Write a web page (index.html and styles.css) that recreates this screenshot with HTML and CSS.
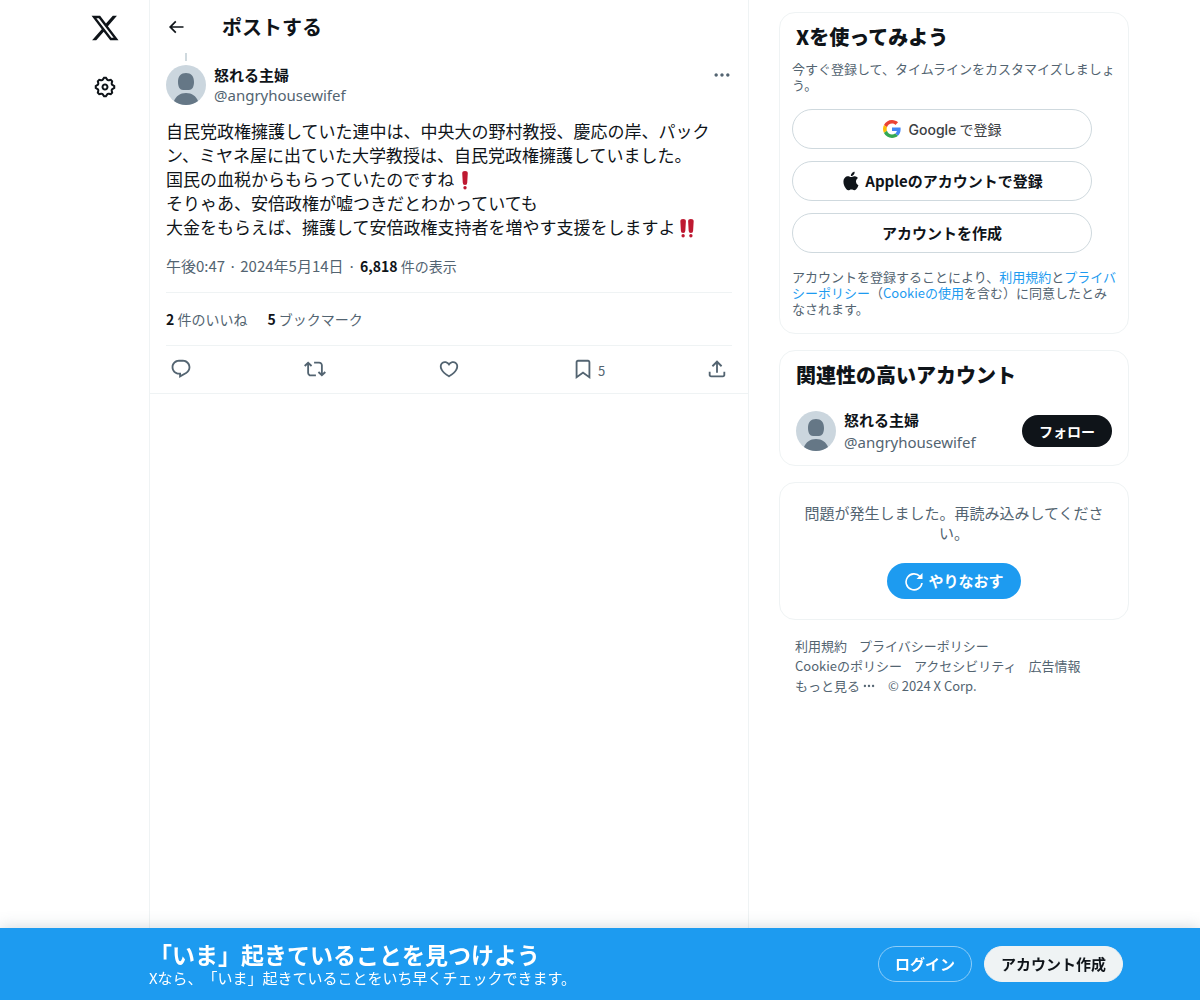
FILE: index.html
```html
<!DOCTYPE html>
<html lang="ja">
<head>
    <meta charset="UTF-8">
    <meta name="viewport" content="width=device-width, initial-scale=1.0">
    <title>怒れる主婦 / X</title>
    <link rel="stylesheet" href="styles.css">
</head>
<body>

    <div class="page">
        <nav class="nav">
            <a href="#" class="nav-logo" aria-label="X">
                <svg viewBox="0 0 24 24"><path d="M18.244 2.25h3.308l-7.227 8.26 8.502 11.24H16.17l-5.214-6.817L4.99 21.75H1.68l7.73-8.835L1.254 2.25H8.08l4.713 6.231zm-1.161 17.52h1.833L7.084 4.126H5.117z"/></svg>
            </a>
            <a href="#" class="nav-settings" aria-label="設定">
                <svg viewBox="0 0 24 24"><path d="M10.54 1.75h2.92l1.57 2.36c.11.17.32.25.53.21l2.53-.59 2.17 2.17-.58 2.54c-.05.2.04.41.21.53l2.36 1.57v2.92l-2.36 1.57c-.17.12-.26.33-.21.53l.58 2.54-2.17 2.17-2.53-.59c-.21-.04-.42.04-.53.21l-1.57 2.36h-2.92l-1.58-2.36c-.11-.17-.32-.25-.52-.21l-2.54.59-2.17-2.17.58-2.54c.05-.2-.03-.41-.21-.53l-2.35-1.57v-2.92L4.1 8.97c.18-.12.26-.33.21-.53L3.73 5.9 5.9 3.73l2.54.59c.2.04.41-.04.52-.21l1.58-2.36zm1.07 2l-.98 1.47C10.05 6.08 9 6.5 7.99 6.27l-1.46-.34-.6.6.33 1.46c.24 1.01-.18 2.07-1.05 2.64l-1.46.98v.78l1.46.98c.87.57 1.29 1.63 1.05 2.64l-.33 1.46.6.6 1.46-.34c1.01-.23 2.06.19 2.64 1.05l.98 1.47h.78l.97-1.47c.58-.86 1.63-1.28 2.65-1.05l1.45.34.61-.6-.34-1.46c-.23-1.01.18-2.07 1.05-2.64l1.47-.98v-.78l-1.47-.98c-.87-.57-1.28-1.63-1.05-2.64l.34-1.46-.61-.6-1.45.34c-1.02.23-2.07-.19-2.65-1.05l-.97-1.47h-.78zM12 10.5c-.83 0-1.5.67-1.5 1.5s.67 1.5 1.5 1.5c.82 0 1.5-.67 1.5-1.5s-.68-1.5-1.5-1.5zM8.5 12c0-1.93 1.56-3.5 3.5-3.5 1.93 0 3.5 1.57 3.5 3.5s-1.57 3.5-3.5 3.5c-1.94 0-3.5-1.57-3.5-3.5z"/></svg>
            </a>
        </nav>

        <main class="main">
            <header class="main-header">
                <button class="icon-button back" aria-label="戻る">
                    <svg viewBox="0 0 24 24"><path d="M7.414 13l5.043 5.04-1.414 1.42L3.586 12l7.457-7.46 1.414 1.42L7.414 11H21v2H7.414z"/></svg>
                </button>
                <h1>ポストする</h1>
            </header>

            <article class="post">
                <div class="thread-line"></div>
                <div class="user">
                    <svg class="avatar" viewBox="0 0 40 40"><circle cx="20" cy="20" r="20" fill="#cbd6de"/><path d="M20 8c5 0 8 3 8 9 0 5-2 8-5 8h-6c-3 0-5-3-5-8 0-6 3-9 8-9zM8 36c2-5 6-8 12-8s10 3 12 8a20 20 0 0 1-24 0z" fill="#657786"/></svg>
                    <div class="user-names">
                        <a href="#" class="name">怒れる主婦</a>
                        <a href="#" class="handle">@angryhousewifef</a>
                    </div>
                    <button class="icon-button more" aria-label="もっと見る">
                        <svg viewBox="0 0 24 24"><path d="M3 12c0-1.1.9-2 2-2s2 .9 2 2-.9 2-2 2-2-.9-2-2zm9 2c1.1 0 2-.9 2-2s-.9-2-2-2-2 .9-2 2 .9 2 2 2zm7 0c1.1 0 2-.9 2-2s-.9-2-2-2-2 .9-2 2 .9 2 2 2z"/></svg>
                    </button>
                </div>

                <p class="post-text">自民党政権擁護していた連中は、中央大の野村教授、慶応の岸、パックン、ミヤネ屋に出ていた大学教授は、自民党政権擁護していました。<br>
                国民の血税からもらっていたのですね<svg class="emoji" viewBox="0 0 36 36" role="img" aria-label="❗"><path d="M13 6q0-4 5-4t5 4l-1 17q0 4-4 4t-4-4z"/><circle cx="18" cy="32" r="3"/></svg><br>
                そりゃあ、安倍政権が嘘つきだとわかっていても<br>
                大金をもらえば、擁護して安倍政権支持者を増やす支援をしますよ<svg class="emoji" viewBox="0 0 36 36" role="img" aria-label="‼"><path d="M6 6q0-4 5-4t5 4l-1 17q0 4-4 4t-4-4zM20 6q0-4 5-4t5 4l-1 17q0 4-4 4t-4-4z"/><circle cx="11" cy="32" r="3"/><circle cx="25" cy="32" r="3"/></svg></p>

                <div class="meta">
                    <a href="#">午後0:47 · 2024年5月14日</a>
                    <span>·</span>
                    <span class="views"><strong>6,818</strong> 件の表示</span>
                </div>

                <div class="stats">
                    <a href="#"><strong>2</strong> 件のいいね</a>
                    <a href="#"><strong>5</strong> ブックマーク</a>
                </div>

                <div class="actions">
                    <button class="icon-button" aria-label="返信">
                        <svg viewBox="0 0 24 24"><path d="M1.751 10c0-4.42 3.584-8 8.005-8h4.366c4.49 0 8.129 3.64 8.129 8.13 0 2.96-1.607 5.68-4.196 7.11l-8.054 4.46v-3.69h-.067c-4.49.1-8.183-3.51-8.183-8.01zm8.005-6c-3.317 0-6.005 2.69-6.005 6 0 3.37 2.77 6.08 6.138 6.01l.351-.01h1.761v2.3l5.087-2.81c1.951-1.08 3.163-3.13 3.163-5.36 0-3.39-2.744-6.13-6.129-6.13H9.756z"/></svg>
                    </button>
                    <button class="icon-button" aria-label="リポスト">
                        <svg viewBox="0 0 24 24"><path d="M4.5 3.88l4.432 4.14-1.364 1.46L5.5 7.55V16c0 1.1.896 2 2 2H13v2H7.5c-2.209 0-4-1.79-4-4V7.55L1.432 9.48.068 8.02 4.5 3.88zM16.5 6H11V4h5.5c2.209 0 4 1.79 4 4v8.45l2.068-1.93 1.364 1.46-4.432 4.14-4.432-4.14 1.364-1.46 2.068 1.93V8c0-1.1-.896-2-2-2z"/></svg>
                    </button>
                    <button class="icon-button" aria-label="いいね">
                        <svg viewBox="0 0 24 24"><path d="M16.697 5.5c-1.222-.06-2.679.51-3.89 2.16l-.805 1.09-.806-1.09C9.984 6.01 8.526 5.44 7.304 5.5c-1.243.07-2.349.78-2.91 1.91-.552 1.12-.633 2.78.479 4.82 1.074 1.97 3.257 4.27 7.129 6.61 3.87-2.34 6.052-4.64 7.126-6.61 1.111-2.04 1.03-3.7.477-4.82-.561-1.13-1.666-1.84-2.908-1.91zm4.187 7.69c-1.351 2.48-4.001 5.12-8.379 7.67l-.503.3-.504-.3c-4.379-2.55-7.029-5.19-8.382-7.67-1.36-2.5-1.41-4.86-.514-6.67.887-1.79 2.647-2.91 4.601-3.01 1.651-.09 3.368.56 4.798 2.01 1.429-1.45 3.146-2.1 4.796-2.01 1.954.1 3.714 1.22 4.601 3.01.896 1.81.846 4.17-.514 6.67z"/></svg>
                    </button>
                    <button class="icon-button" aria-label="ブックマーク">
                        <svg viewBox="0 0 24 24"><path d="M4 4.5C4 3.12 5.119 2 6.5 2h11C18.881 2 20 3.12 20 4.5v18.44l-8-5.71-8 5.71V4.5zM6.5 4c-.276 0-.5.22-.5.5v14.56l6-4.29 6 4.29V4.5c0-.28-.224-.5-.5-.5h-11z"/></svg>
                        <span>5</span>
                    </button>
                    <button class="icon-button" aria-label="共有">
                        <svg viewBox="0 0 24 24"><path d="M12 2.59l5.7 5.7-1.41 1.42L13 6.41V16h-2V6.41l-3.3 3.3-1.41-1.42L12 2.59zM21 15l-.02 3.51c0 1.38-1.12 2.49-2.5 2.49H5.5C4.11 21 3 19.88 3 18.5V15h2v3.5c0 .28.22.5.5.5h12.98c.28 0 .5-.22.5-.5L19 15h2z"/></svg>
                    </button>
                </div>
            </article>
        </main>

        <aside class="sidebar">
            <section class="card signup">
                <h2>Xを使ってみよう</h2>
                <p>今すぐ登録して、タイムラインをカスタマイズしましょう。</p>
                <button class="pill google">
                    <svg viewBox="0 0 48 48"><path fill="#EA4335" d="M24 9.5c3.54 0 6.71 1.22 9.21 3.6l6.85-6.85C35.9 2.38 30.47 0 24 0 14.62 0 6.51 5.38 2.56 13.22l7.98 6.19C12.43 13.72 17.74 9.5 24 9.5z"/><path fill="#4285F4" d="M46.98 24.55c0-1.57-.15-3.09-.38-4.55H24v9.02h12.94c-.58 2.96-2.26 5.48-4.78 7.18l7.73 6c4.51-4.18 7.09-10.36 7.09-17.65z"/><path fill="#FBBC05" d="M10.53 28.59c-.48-1.45-.76-2.99-.76-4.59s.27-3.14.76-4.59l-7.98-6.19C.92 16.46 0 20.12 0 24c0 3.88.92 7.54 2.56 10.78l7.97-6.19z"/><path fill="#34A853" d="M24 48c6.48 0 11.93-2.13 15.89-5.81l-7.73-6c-2.15 1.45-4.92 2.3-8.16 2.3-6.26 0-11.57-4.22-13.47-9.91l-7.98 6.19C6.51 42.62 14.62 48 24 48z"/></svg>
                    <span><span class="google-name">Google</span> で登録</span>
                </button>
                <button class="pill apple">
                    <svg viewBox="0 0 24 24"><path d="M16.365 1.43c0 1.14-.493 2.27-1.177 3.08-.744.9-1.99 1.57-2.987 1.57-.12 0-.23-.02-.3-.03-.01-.06-.04-.22-.04-.39 0-1.15.572-2.27 1.206-2.98.804-.94 2.142-1.64 3.248-1.68.03.13.05.28.05.43zm4.565 15.71c-.03.07-.463 1.58-1.518 3.12-.945 1.34-1.94 2.71-3.43 2.71-1.517 0-1.9-.88-3.63-.88-1.698 0-2.302.91-3.67.91-1.377 0-2.332-1.26-3.428-2.8-1.287-1.82-2.323-4.63-2.323-7.28 0-4.28 2.797-6.55 5.552-6.55 1.448 0 2.675.95 3.6.95.865 0 2.222-1.01 3.902-1.01.613 0 2.886.06 4.374 2.19-.13.09-2.383 1.37-2.383 4.19 0 3.26 2.854 4.42 2.955 4.45z"/></svg>
                    <span>Appleのアカウントで登録</span>
                </button>
                <button class="pill">アカウントを作成</button>
                <p>アカウントを登録することにより、<a href="#">利用規約</a>と<a href="#">プライバシーポリシー</a>（<a href="#">Cookieの使用</a>を含む）に同意したとみなされます。</p>
            </section>

            <section class="card related">
                <h2>関連性の高いアカウント</h2>
                <div class="user">
                    <svg class="avatar" viewBox="0 0 40 40"><circle cx="20" cy="20" r="20" fill="#cbd6de"/><path d="M20 8c5 0 8 3 8 9 0 5-2 8-5 8h-6c-3 0-5-3-5-8 0-6 3-9 8-9zM8 36c2-5 6-8 12-8s10 3 12 8a20 20 0 0 1-24 0z" fill="#657786"/></svg>
                    <div class="user-names">
                        <a href="#" class="name">怒れる主婦</a>
                        <a href="#" class="handle">@angryhousewifef</a>
                    </div>
                    <button class="follow">フォロー</button>
                </div>
            </section>

            <section class="card error">
                <p>問題が発生しました。再読み込みしてください。</p>
                <button class="retry">
                    <svg viewBox="0 0 20 20"><path d="M16 5.500A8 8 0 1 0 18 12"/><path class="arrow" d="M18.500 2v6h-6z"/></svg>
                    <span>やりなおす</span>
                </button>
            </section>

            <footer class="links">
                <a href="#">利用規約</a>
                <a href="#">プライバシーポリシー</a>
                <a href="#">Cookieのポリシー</a>
                <a href="#">アクセシビリティ</a>
                <a href="#">広告情報</a>
                <button>もっと見る <svg viewBox="0 0 24 24"><path d="M3 12c0-1.1.9-2 2-2s2 .9 2 2-.9 2-2 2-2-.9-2-2zm9 2c1.1 0 2-.9 2-2s-.9-2-2-2-2 .9-2 2 .9 2 2 2zm7 0c1.1 0 2-.9 2-2s-.9-2-2-2-2 .9-2 2 .9 2 2 2z"/></svg></button>
                <span>© 2024 X Corp.</span>
            </footer>
        </aside>
    </div>

    <div class="bottom-bar">
        <div class="bottom-inner">
            <div class="bottom-text">
                <strong>「いま」起きていることを見つけよう</strong>
                <span>Xなら、「いま」起きていることをいち早くチェックできます。</span>
            </div>
            <button class="login">ログイン</button>
            <button class="create">アカウント作成</button>
        </div>
    </div>

</body>
</html>
```
FILE: styles.css
```css
* {
    box-sizing: border-box;
}
body {
    margin: 0;
    font-family: "Noto Sans CJK JP", sans-serif;
    font-size: 15px;
    line-height: 20px;
    text-spacing-trim: space-all;
    color: #0f1419;
    background-color: #fff;
}
h1, h2, p {
    margin: 0;
}
a {
    color: inherit;
    text-decoration: none;
}
a:hover {
    text-decoration: underline;
}
button {
    font: inherit;
    font-weight: 700;
    color: inherit;
    padding: 0;
    border: none;
    background: none;
    cursor: pointer;
}
svg {
    display: block;
    fill: currentColor;
    flex-shrink: 0;
}

/* columns */
.page {
    display: flex;
    max-width: 1078px;
    min-height: 100vh;
    margin: 0 auto;
    padding-right: 10px;
}
.nav {
    display: flex;
    flex-direction: column;
    align-items: center;
    gap: 32px;
    width: 88px;
    padding-top: 13px;
    flex-shrink: 0;
}
.nav-logo svg {
    width: 30px;
    height: 30px;
}
.nav-settings svg {
    width: 24px;
    height: 24px;
}
.main {
    flex: 1;
    max-width: 600px;
    border-left: 1px solid #eff3f4;
    border-right: 1px solid #eff3f4;
}
.sidebar {
    display: flex;
    flex-direction: column;
    gap: 16px;
    width: 350px;
    margin-left: 30px;
    padding: 12px 0 88px;
    flex-shrink: 0;
}

/* post */
.main-header {
    display: flex;
    align-items: center;
    gap: 36px;
    height: 53px;
    padding: 0 16px;
}
.main-header h1 {
    font-size: 20px;
    line-height: 24px;
}
.icon-button {
    display: flex;
    align-items: center;
    gap: 4px;
}
.icon-button svg {
    width: 20px;
    height: 20px;
}
.post {
    padding: 0 16px;
    border-bottom: 1px solid #eff3f4;
}
.thread-line {
    width: 2px;
    height: 8px;
    margin: 0 0 4px 19px;
    background-color: #cfd9de;
}
.user {
    display: flex;
    align-items: center;
    gap: 8px;
}
.avatar {
    width: 40px;
    height: 40px;
}
.user-names {
    display: flex;
    flex-direction: column;
    flex: 1;
}
.name {
    font-weight: 700;
}
.handle {
    color: #536471;
    font-family: "Noto Sans", sans-serif;
}
.more {
    align-self: flex-start;
    color: #536471;
}
.post-text {
    margin-top: 14px;
    font-size: 17px;
    line-height: 24px;
}
.emoji {
    display: inline-block;
    width: 20px;
    height: 20px;
    margin: 0 1px;
    vertical-align: -4px;
    fill: #be1931;
}
.meta {
    display: flex;
    gap: 4px;
    padding: 17px 0 16px;
    color: #536471;
}
.views {
    font-size: 14px;
}
.meta strong, .stats strong {
    color: #0f1419;
}
.stats {
    display: flex;
    gap: 20px;
    padding: 16px 0;
    font-size: 14px;
    color: #536471;
    border-top: 1px solid #eff3f4;
    border-bottom: 1px solid #eff3f4;
}
.actions {
    display: flex;
    justify-content: space-between;
    height: 47px;
    padding: 0 4px 2px;
    color: #536471;
}
.actions .icon-button {
    width: 22px;
}
.actions svg {
    width: 22px;
    height: 22px;
}
.actions span {
    padding-top: 4px;
    font-size: 13px;
    font-weight: 400;
}

/* sidebar */
.card {
    border: 1px solid #eff3f4;
    border-radius: 16px;
}
.card h2 {
    font-size: 20px;
    font-weight: 800;
    line-height: 24px;
}
.signup {
    display: flex;
    flex-direction: column;
    gap: 12px;
    padding: 12px 12px 16px;
}
.signup h2 {
    padding: 0 4px;
}
.signup p {
    font-size: 13px;
    line-height: 16px;
    color: #536471;
}
.signup p + .pill {
    margin-top: 4px;
}
.pill + p {
    margin-top: 4px;
}
.signup p a {
    color: #1d9bf0;
}
.pill {
    display: flex;
    align-items: center;
    justify-content: center;
    gap: 4px;
    width: 300px;
    height: 40px;
    border: 1px solid #cfd9de;
    border-radius: 20px;
}
.pill svg {
    width: 20px;
    height: 20px;
}
.google {
    gap: 8px;
    font-size: 14px;
    font-weight: 400;
    color: #3c4043;
}
.google-name {
    font-family: Inter, sans-serif;
    font-weight: 500;
}
.google svg {
    width: 18px;
    height: 18px;
}
.related {
    display: flex;
    flex-direction: column;
    gap: 23px;
    padding: 12px 16px 13px;
}
.related .user-names {
    gap: 2px;
}
.follow {
    height: 32px;
    padding: 0 17px;
    font-size: 14px;
    color: #fff;
    background-color: #0f1419;
    border-radius: 16px;
}
.error {
    display: flex;
    flex-direction: column;
    align-items: center;
    gap: 20px;
    padding: 20px;
}
.error p {
    text-align: center;
    color: #536471;
}
.retry {
    display: flex;
    align-items: center;
    gap: 4px;
    height: 36px;
    padding: 0 17px;
    color: #fff;
    background-color: #1d9bf0;
    border-radius: 18px;
}
.retry svg {
    width: 20px;
    height: 20px;
    fill: none;
    stroke: currentColor;
    stroke-width: 1.6;
}
.retry .arrow {
    fill: currentColor;
    stroke: none;
}
.links {
    display: flex;
    flex-wrap: wrap;
    column-gap: 12px;
    padding: 0 32px 0 16px;
    font-size: 13px;
    color: #536471;
}
.links button {
    display: flex;
    align-items: center;
    gap: 2px;
    font-weight: 400;
}
.links svg {
    width: 14px;
    height: 14px;
}

/* login bar */
.bottom-bar {
    position: fixed;
    left: 0;
    right: 0;
    bottom: 0;
    color: #fff;
    background-color: #1d9bf0;
    box-shadow: 0 0 15px rgba(101, 119, 134, 0.3);
}
.bottom-inner {
    display: flex;
    align-items: center;
    gap: 12px;
    max-width: 1078px;
    margin: 0 auto;
    padding: 12px 16px 12px 88px;
}
.bottom-text {
    display: flex;
    flex-direction: column;
    flex: 1;
}
.bottom-text strong {
    font-size: 23px;
    line-height: 28px;
}
.login, .create {
    height: 36px;
    padding: 0 16px;
    border: 1px solid #8ecdf8;
    border-radius: 18px;
}
.create {
    color: #0f1419;
    background-color: #eff3f4;
    border-color: #eff3f4;
}
```
